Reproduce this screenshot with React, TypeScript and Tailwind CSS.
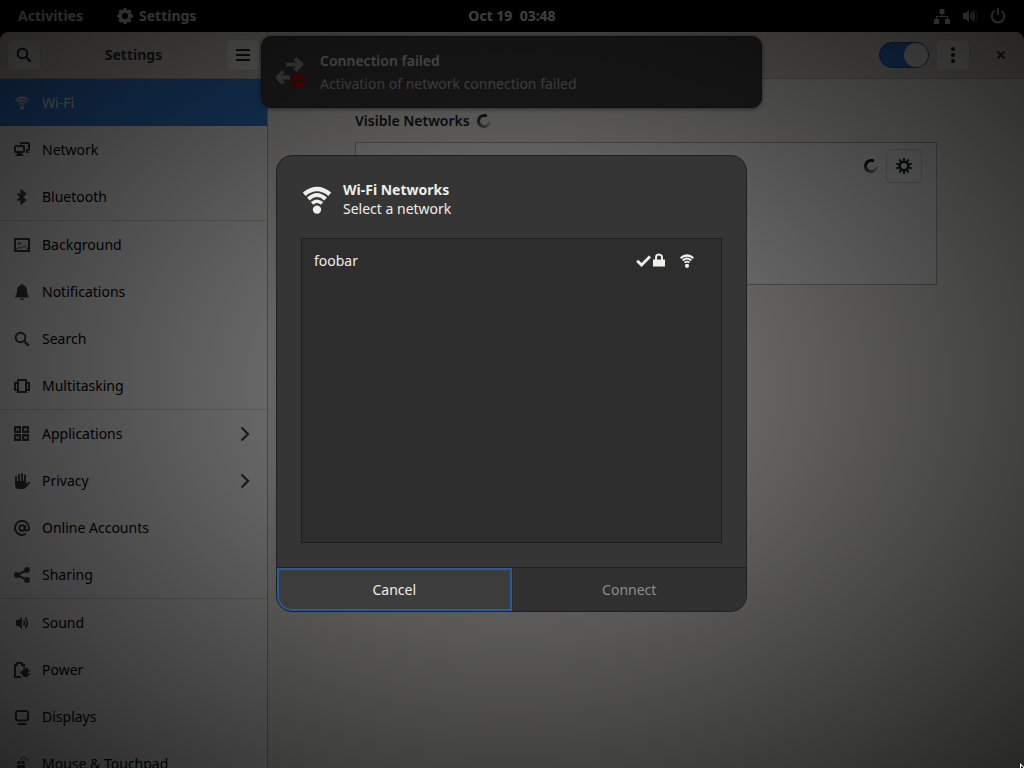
import React from "react";

type IconProps = { className?: string };

function Svg({ className = "size-4", children }: IconProps & { children: React.ReactNode }) {
  return (
    <svg viewBox="0 0 16 16" className={`shrink-0 ${className}`} fill="currentColor" aria-hidden="true">
      {children}
    </svg>
  );
}

const WifiIcon = ({ className }: IconProps) => (
  <Svg className={className}>
    <g fill="none" stroke="currentColor">
      <path d="M1.600 5.100Q8 -.1 14.400 5.100" strokeWidth="2.200" />
      <path d="M3.700 7.500Q8 3.500 12.300 7.500" strokeWidth="1.900" />
      <path d="M5.500 9.700Q8 7.500 10.500 9.700" strokeWidth="1.700" />
    </g>
    <circle cx="8" cy="12.800" r="2.100" />
  </Svg>
);

const SearchIcon = ({ className }: IconProps) => (
  <Svg className={className}>
    <circle cx="6.500" cy="6.500" r="4.800" fill="none" stroke="currentColor" strokeWidth="2" />
    <path d="M10 10l4.600 4.600" stroke="currentColor" strokeWidth="2.400" />
  </Svg>
);

const NetworkIcon = () => (
  <Svg>
    <path fillRule="evenodd" d="M1.500 3H9.500a1.500 1.500 0 0 1 1.500 1.500v5A1.500 1.500 0 0 1 9.500 11H8v1l2 2H1l2-2v-1H1.500A1.500 1.500 0 0 1 0 9.500v-5A1.500 1.500 0 0 1 1.500 3zM2 5v4h7V5z" />
    <path d="M6 0h8.500A1.500 1.500 0 0 1 16 1.500v6A1.500 1.500 0 0 1 14.500 9H14v1l1.500 1H12V7h2V2H8v.5H6z" />
  </Svg>
);

const BluetoothIcon = () => (
  <Svg>
    <path d="M3.500 4.500l7.500 6.500L7.500 14V2L11 5l-7.500 6.500" fill="none" stroke="currentColor" strokeWidth="2.200" />
  </Svg>
);

const BackgroundIcon = () => (
  <Svg>
    <path d="M1 2h14v12H1z" fill="none" stroke="currentColor" strokeWidth="2" />
    <circle cx="5.500" cy="6.500" r="1.200" fill="none" stroke="currentColor" />
    <path d="M2 11.500c2 0 2.500-1 3.500-1s1.500.8 2 .8S9 9 10 9s2 2.500 4 2.500" fill="none" stroke="currentColor" />
  </Svg>
);

const BellIcon = () => (
  <Svg>
    <path d="M8 0c.8 0 1.300.6 1.300 1.300C11.600 2 13 4 13 6.500c0 3 .5 4 1.700 5.500v1.500H1.300V12C2.500 10.500 3 9.500 3 6.500 3 4 4.400 2 6.700 1.300 6.700.6 7.200 0 8 0zM6 14.500h4c-.2 1-1 1.500-2 1.500s-1.800-.5-2-1.500z" />
  </Svg>
);

const MultitaskIcon = () => (
  <Svg>
    <path d="M4 2h8v12H4z" fill="none" stroke="currentColor" strokeWidth="2" />
    <path d="M3 4H0v9h3v-2H2V6h1zM13 4h3v9h-3v-2h1V6h-1z" />
  </Svg>
);

const AppsIcon = () => (
  <Svg>
    <path fillRule="evenodd" d="M0 0h7v7H0zM2 2.500v2h3v-2zM8 0h7v7H8zM10 2.500v2h3v-2zM0 8h7v7H0zM2 10.500v2h3v-2zM8 8h7v7H8zM10 10.500v2h3v-2z" />
  </Svg>
);

const HandIcon = () => (
  <Svg>
    <g stroke="currentColor" strokeWidth="1.900" strokeLinecap="round" fill="none">
      <path d="M2 4v7M5 2v8M8 1v9M11 2.500V10" />
    </g>
    <path d="M1 8h11v2.500L14.300 9c.8-.3 1.900.5 1.500 1.200l-3.600 4c-.8 1.200-1.700 1.800-3.200 1.800H5c-2.500 0-4-1.700-4-4z" />
  </Svg>
);

const AtIcon = () => (
  <Svg>
    <circle cx="8" cy="8" r="2.700" fill="none" stroke="currentColor" strokeWidth="2" />
    <path d="M11 5v4c0 2.300 4 2.300 4-1a7 7 0 1 0-3 5.700" fill="none" stroke="currentColor" strokeWidth="2" />
  </Svg>
);

const ShareIcon = () => (
  <Svg>
    <path d="M13 3L3 8l10 5" fill="none" stroke="currentColor" strokeWidth="2" />
    <circle cx="13" cy="3" r="2.900" />
    <circle cx="3" cy="8" r="2.900" />
    <circle cx="13" cy="13" r="2.900" />
  </Svg>
);

const SoundIcon = ({ className }: IconProps) => (
  <Svg className={className}>
    <path d="M2 5h2.500L8 2v12l-3.500-3H2z" />
    <path d="M9.500 5.500c1.300 1.500 1.300 3.500 0 5" fill="none" stroke="currentColor" strokeWidth="1.700" />
    <path d="M11.300 3c2.600 2.800 2.600 7.200 0 10" fill="none" stroke="currentColor" strokeWidth="1.700" />
  </Svg>
);

const PowerIcon = () => (
  <Svg>
    <path d="M7 15H1V3h2V1h5v2h2v3" fill="none" stroke="currentColor" strokeWidth="2" />
    <path d="M14 6v2h2v1.500h-2v2h2V13h-2v2h-2.500C9.500 15 8 13.500 8 11.500H6v-2h2.200C8.700 7.500 10 6 12 6z" />
  </Svg>
);

const DisplayIcon = () => (
  <Svg>
    <rect x="2" y="2" width="12" height="9.500" rx="2" fill="none" stroke="currentColor" strokeWidth="2" />
    <path d="M4 14h8l1 2H3z" />
  </Svg>
);

const MouseIcon = () => (
  <Svg>
    <path d="M3 8c0-2.500 1.500-3.500 3.300-3.500V8zM7.500 4.500C9.500 4.500 11 5.500 11 8H7.500zM3 9h8v3.500a4 4 0 0 1-8 0z" />
    <path d="M7 4C7 1 10 0 11 2s2 3 4.500 1" fill="none" stroke="currentColor" />
  </Svg>
);

const GearIcon = () => (
  <Svg>
    <circle cx="8" cy="8" r="4.700" fill="none" stroke="currentColor" strokeWidth="3.200" />
    {[0, 45, 90, 135, 180, 225, 270, 315].map((deg) => (
      <rect key={deg} x="6.200" y="0" width="3.600" height="3.500" rx="1" transform={`rotate(${deg} 8 8)`} />
    ))}
  </Svg>
);

const CogIcon = () => (
  <Svg>
    <circle cx="8" cy="8" r="4.200" fill="none" stroke="currentColor" strokeWidth="2.400" />
    {[0, 36, 72, 108, 144, 180, 216, 252, 288, 324].map((deg) => (
      <rect key={deg} x="7" y="0" width="2" height="3.500" rx="0.500" transform={`rotate(${deg} 8 8)`} />
    ))}
  </Svg>
);

const ChevronIcon = () => (
  <Svg>
    <path d="M4.500 1.500L11 8l-6.500 6.500" fill="none" stroke="currentColor" strokeWidth="2.200" />
  </Svg>
);

function Spinner({ className = "size-4" }: IconProps) {
  const steps = 14;
  const point = (deg: number) => {
    const a = (deg * Math.PI) / 180;
    return `${(8 + 5.5 * Math.cos(a)).toFixed(2)} ${(8 + 5.5 * Math.sin(a)).toFixed(2)}`;
  };
  return (
    <Svg className={className}>
      {Array.from({ length: steps }, (_, i) => {
        const start = 300 - i * 21;
        return (
          <path
            key={i}
            d={`M${point(start)}A5.500 5.500 0 0 0 ${point(start - 22)}`}
            fill="none"
            stroke="currentColor"
            strokeWidth="3"
            opacity={i < 5 ? 1 : 1 - (i - 4) / 11}
          />
        );
      })}
    </Svg>
  );
}

type Item = { label: string; icon: React.ReactNode; more?: boolean };

const groups: Item[][] = [
  [
    { label: "Wi-Fi", icon: <WifiIcon /> },
    { label: "Network", icon: <NetworkIcon /> },
    { label: "Bluetooth", icon: <BluetoothIcon /> },
  ],
  [
    { label: "Background", icon: <BackgroundIcon /> },
    { label: "Notifications", icon: <BellIcon /> },
    { label: "Search", icon: <SearchIcon /> },
    { label: "Multitasking", icon: <MultitaskIcon /> },
  ],
  [
    { label: "Applications", icon: <AppsIcon />, more: true },
    { label: "Privacy", icon: <HandIcon />, more: true },
    { label: "Online Accounts", icon: <AtIcon /> },
    { label: "Sharing", icon: <ShareIcon /> },
  ],
  [
    { label: "Sound", icon: <SoundIcon /> },
    { label: "Power", icon: <PowerIcon /> },
    { label: "Displays", icon: <DisplayIcon /> },
    { label: "Mouse & Touchpad", icon: <MouseIcon /> },
  ],
];

function TopBar() {
  return (
    <header className="grid h-8 shrink-0 grid-cols-3 items-center bg-black px-[18px] font-bold text-[#e0e0e0]">
      <div className="flex items-center gap-[34px]">
        <button type="button">Activities</button>
        <button type="button" className="flex items-center gap-1.5">
          <GearIcon />
          Settings
        </button>
      </div>
      <time className="text-center whitespace-pre">Oct 19  03:48</time>
      <div className="flex items-center justify-end gap-3">
        <Svg>
          <path d="M5.500 1h5v5h-2v2H14v3h2v5h-5v-5h2V9H3v2h2v5H0v-5h2V8h5.500V6h-2z" />
        </Svg>
        <Svg>
          <path d="M1 5h2.500L7 2v12l-3.500-3H1z" />
          <path d="M8.500 5.500c1.300 1.500 1.300 3.500 0 5M10.300 3.500c2.200 2.500 2.200 6.500 0 9" fill="none" stroke="currentColor" strokeWidth="1.700" />
          <path d="M12.800 2c3 3.300 3 8.700 0 12" fill="none" stroke="currentColor" strokeWidth="1.500" opacity=".35" />
        </Svg>
        <Svg>
          <path d="M4.600 2.800a6.300 6.300 0 1 0 6.800 0M8 0v7" fill="none" stroke="currentColor" strokeWidth="2" />
        </Svg>
      </div>
    </header>
  );
}

const headerButton =
  "flex h-8 w-[34px] items-center justify-center rounded-[5px] border border-[#d2cdc8] bg-[#f0eeec] text-[#1d2122]";

function Sidebar() {
  return (
    <aside className="flex w-[268px] shrink-0 flex-col border-r border-[#b5afa9] bg-white">
      <div className="flex h-[47px] shrink-0 items-center justify-between border-b border-[#bfb8b1] bg-[#dad6d2] px-[7px]">
        <button type="button" aria-label="Search" className={headerButton}>
          <SearchIcon />
        </button>
        <h1 className="font-bold text-[#2e3436]">Settings</h1>
        <button type="button" aria-label="Menu" className={headerButton}>
          <Svg>
            <path d="M1 2h14v2H1zM1 7h14v2H1zM1 12h14v2H1z" />
          </Svg>
        </button>
      </div>
      <nav className="min-h-0 overflow-hidden">
        {groups.map((group, g) => (
          <ul key={g} className={g > 0 ? "border-t border-[#dedbd8]" : ""}>
            {group.map((item) => (
              <li key={item.label}>
                <a
                  href="#"
                  className={
                    item.label === "Wi-Fi"
                      ? "flex h-[47px] items-center gap-3 bg-[#3584e4] px-3.5 text-white"
                      : "flex h-[47px] items-center gap-3 px-3.5 text-black"
                  }
                >
                  <span className="opacity-75">{item.icon}</span>
                  <span className="flex-1">{item.label}</span>
                  {item.more && <span className="opacity-75"><ChevronIcon /></span>}
                </a>
              </li>
            ))}
          </ul>
        ))}
      </nav>
    </aside>
  );
}

function NetworksPanel() {
  return (
    <main className="flex min-w-0 flex-1 flex-col bg-[#f6f5f2]">
      <div className="flex h-[47px] shrink-0 items-center justify-end border-b border-[#bfb8b1] bg-[#dad6d2] pr-[15px]">
        <input
          type="checkbox"
          role="switch"
          aria-label="Wi-Fi"
          defaultChecked
          className="h-[26px] w-[50px] appearance-none rounded-full border border-[#15539e] bg-[#2f79d8] before:ml-6 before:block before:size-6 before:rounded-full before:bg-[#f3f1ef]"
        />
        <button type="button" aria-label="More options" className={`${headerButton} ml-[7px]`}>
          <Svg>
            <circle cx="8" cy="2" r="2" />
            <circle cx="8" cy="8" r="2" />
            <circle cx="8" cy="14" r="2" />
          </Svg>
        </button>
        <button type="button" aria-label="Close" className="ml-[23px] text-[#2e3436]">
          <Svg>
            <path d="M4.500 4.500l7 7M11.500 4.500l-7 7" stroke="currentColor" strokeWidth="2.100" />
          </Svg>
        </button>
      </div>
      <section className="mx-auto w-[582px] max-w-full pt-8">
        <h2 className="flex h-5 items-center gap-1.5 font-semibold text-[#1d2122]">
          Visible Networks
          <Spinner />
        </h2>
        <div className="mt-[11px] flex h-[143px] items-start justify-end gap-[7px] border border-[#b5afa9] bg-white px-3.5 py-1.5">
          <span className="flex h-[34px] items-center">
            <Spinner />
          </span>
          <button
            type="button"
            aria-label="Network settings"
            className="flex h-[34px] w-9 items-center justify-center rounded-[5px] border border-[#dcd8d4] text-[#1d2122]"
          >
            <CogIcon />
          </button>
        </div>
      </section>
    </main>
  );
}

function Notification() {
  return (
    <div className="absolute inset-x-0 top-9 flex justify-center pr-px">
      <div
        role="status"
        className="flex h-[72px] w-[501px] items-center gap-3.5 rounded-[10px] border border-[#303030] bg-[#404040] px-3 shadow-[0_1px_4px_rgba(0,0,0,0.5)]"
      >
        <svg viewBox="0 0 32 32" className="size-8" aria-hidden="true">
          <g fill="none" stroke="#a0a0a0" strokeWidth="3.800" strokeLinejoin="round">
            <path d="M12 8.500h15M21 2.500l6.500 6-6.500 6M16 21.500H4M9.500 15.500l-6 6 6 6" />
          </g>
          <circle cx="24.500" cy="24.500" r="7.200" fill="#d40000" />
          <path d="M20 24.500h9" stroke="#303030" strokeWidth="2" />
        </svg>
        <div className="flex flex-col gap-[3px] text-[#b8b8b8]">
          <strong className="leading-5 font-semibold text-[#dadada]">Connection failed</strong>
          <span className="leading-5">Activation of network connection failed</span>
        </div>
      </div>
    </div>
  );
}

function WifiDialog() {
  return (
    <div
      role="dialog"
      aria-labelledby="dialog-title"
      className="flex w-[471px] max-w-full flex-col overflow-hidden rounded-2xl border border-[#1f1f1f] bg-[#353535] text-[#eeeeec]"
    >
      <div className="flex items-center gap-2.5 px-6 pt-6">
        <WifiIcon className="size-8" />
        <div className="pb-px">
          <h2 id="dialog-title" className="leading-[19px] font-bold">Wi-Fi Networks</h2>
          <p className="leading-[19px]">Select a network</p>
        </div>
      </div>
      <ul className="mx-6 mt-[19px] mb-6 h-[305px] border border-[#1f1f1f] bg-[#2d2d2d]">
        <li>
          <button type="button" className="flex h-[43px] w-full items-center pr-[26px] pl-3 text-left">
            <span className="flex-1">foobar</span>
            <Svg>
              <path d="M2.200 7.700l4.300 4.300L15 3.500" fill="none" stroke="currentColor" strokeWidth="2.900" />
            </Svg>
            <Svg>
              <path fillRule="evenodd" d="M2 6.500h2V4.500a4 4 0 0 1 8 0v2h2v7H2zM6 6.500h4v-2a2 2 0 0 0-4 0z" />
            </Svg>
            <WifiIcon className="ml-3 size-4" />
          </button>
        </li>
      </ul>
      <div className="grid grid-cols-2 border-t border-[#1f1f1f]">
        <button type="button" className="h-[43px] rounded-bl-[15px] border-2 border-[#285b9b] bg-[#3c3c3c]">
          Cancel
        </button>
        <button type="button" disabled className="h-[43px] border-l border-[#292929] bg-[#303030] text-[#8c8c8b]">
          Connect
        </button>
      </div>
    </div>
  );
}

export default function App() {
  return (
    <div className="relative flex h-screen flex-col overflow-hidden bg-black font-['Noto_Sans',sans-serif] text-sm leading-5">
      <TopBar />
      <div className="flex min-h-0 flex-1 overflow-hidden rounded-t-[9px]">
        <Sidebar />
        <NetworksPanel />
      </div>
      <Notification />
      <div className="absolute inset-0 flex items-center justify-center bg-[radial-gradient(ellipse_farthest-corner,rgba(0,0,0,0.47),rgba(0,0,0,0.84))] pr-px pb-px">
        <WifiDialog />
      </div>
      <svg viewBox="0 0 4 5" className="absolute right-0 bottom-0 h-[5px] w-1" aria-hidden="true">
        <path d="M0 0l4 4v1H0z" fill="#fff" />
        <path d="M1 2.500L3.500 5H1z" fill="#000" />
      </svg>
    </div>
  );
}
